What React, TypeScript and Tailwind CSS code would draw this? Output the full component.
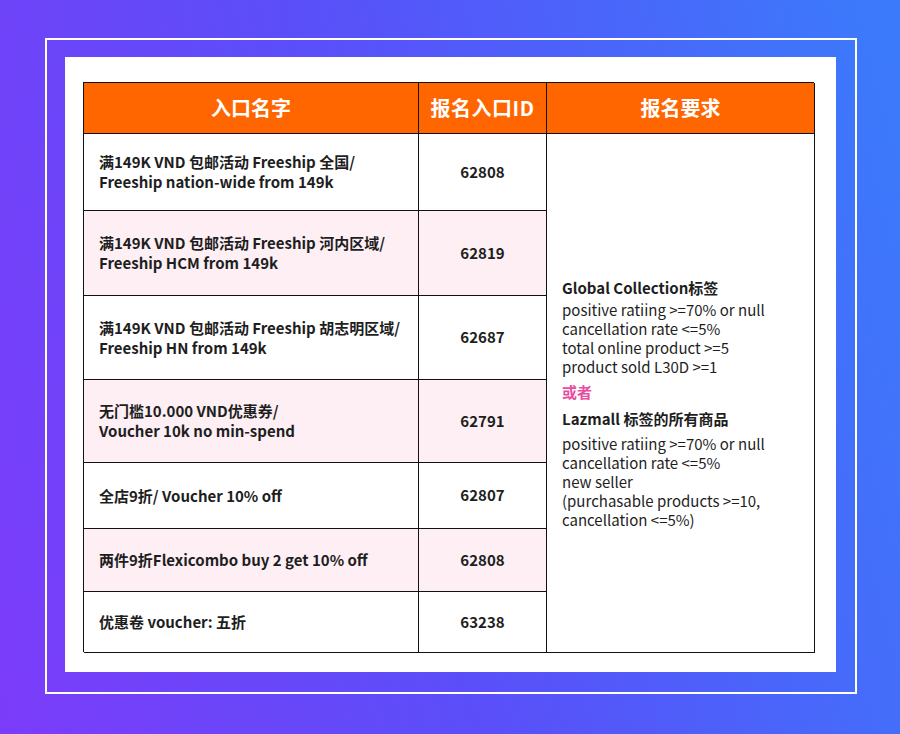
import React from "react";

const rows: { name: string[]; id: string; pink: boolean }[] = [
  { name: ["满149K VND 包邮活动 Freeship 全国/", "Freeship nation-wide from 149k"], id: "62808", pink: false },
  { name: ["满149K VND 包邮活动 Freeship 河内区域/", "Freeship HCM from 149k"], id: "62819", pink: true },
  { name: ["满149K VND 包邮活动 Freeship 胡志明区域/", "Freeship HN from 149k"], id: "62687", pink: false },
  { name: ["无门槛10.000 VND优惠券/", "Voucher 10k no min-spend"], id: "62791", pink: true },
  { name: ["全店9折/ Voucher 10% off"], id: "62807", pink: false },
  { name: ["两件9折Flexicombo buy 2 get 10% off"], id: "62808", pink: true },
  { name: ["优惠卷 voucher: 五折"], id: "63238", pink: false },
];

export default function App() {
  return (
    <div
      className="w-[900px] h-[734px] overflow-hidden bg-[linear-gradient(75deg,#7c3cf9_0%,#5a4ff9_45%,#3a7cfb_100%)] pt-[38px] pl-[45px]"
      style={{ fontFamily: '"Noto Sans CJK SC", "Noto Sans", sans-serif' }}
    >
      <div className="w-[812px] h-[656px] border-2 border-white pl-[18px] pt-[17px]">
        <div className="w-[771px] h-[615px] bg-white pl-[18px] pt-[25px]">
          <div className="grid grid-cols-[335px_128px_268px] grid-rows-[51px_77px_85px_84px_83px_66px_63px_61px] w-[731px] h-[570px] border-l-[1.5px] border-t-[1.5px] border-[#111] text-[#1e1e1e]">
            <div className="bg-[#ff6600] border-r-[1.5px] border-b-[1.5px] border-[#111] flex items-center justify-center text-white font-bold text-[20px]">
              入口名字
            </div>
            <div className="bg-[#ff6600] border-r-[1.5px] border-b-[1.5px] border-[#111] flex items-center justify-center text-white font-bold text-[20px] tracking-[0.5px]">
              报名入口ID
            </div>
            <div className="bg-[#ff6600] border-r-[1.5px] border-b-[1.5px] border-[#111] flex items-center justify-center text-white font-bold text-[20px]">
              报名要求
            </div>
            {rows.map((r, i) => (
              <React.Fragment key={i}>
                <div
                  className={`${r.pink ? "bg-[#fdeff4]" : "bg-white"} col-start-1 border-r-[1.5px] border-b-[1.5px] border-[#111] flex flex-col justify-center pl-[15px] font-bold text-[15px] leading-[20px]`}
                  style={{ gridRowStart: i + 2 }}
                >
                  {r.name.map((l, j) => (
                    <div key={j}>{l}</div>
                  ))}
                </div>
                <div
                  className={`${r.pink ? "bg-[#fdeff4]" : "bg-white"} col-start-2 border-r-[1.5px] border-b-[1.5px] border-[#111] flex items-center justify-center font-bold text-[15px]`}
                  style={{ gridRowStart: i + 2 }}
                >
                  {r.id}
                </div>
              </React.Fragment>
            ))}
            <div className="col-start-3 row-start-2 row-span-7 border-r-[1.5px] border-b-[1.5px] border-[#111] bg-white pl-[15px] pt-[144px] text-[15px] leading-[19px] text-[#1e1e1e]">
              <div className="font-bold mb-[3px]">Global Collection标签</div>
              <div>positive ratiing &gt;=70% or null</div>
              <div>cancellation rate &lt;=5%</div>
              <div>total online product &gt;=5</div>
              <div>product sold L30D &gt;=1</div>
              <div className="mt-[6px] font-bold text-[#ea4c9f]">或者</div>
              <div className="mt-[8px] font-bold">Lazmall 标签的所有商品</div>
              <div className="mt-[6px]">positive ratiing &gt;=70% or null</div>
              <div>cancellation rate &lt;=5%</div>
              <div>new seller</div>
              <div>(purchasable products &gt;=10,</div>
              <div>cancellation &lt;=5%)</div>
            </div>
          </div>
        </div>
      </div>
    </div>
  );
}
